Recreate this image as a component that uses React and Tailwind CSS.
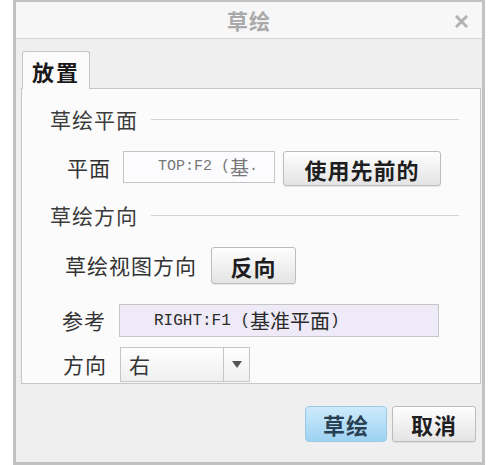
import React from 'react';

const cjk = { fontFamily: '"Noto Sans CJK SC", "Noto Sans", sans-serif' };
const mono = { fontFamily: '"Liberation Mono", "Noto Sans CJK SC", monospace' };

const SectionTitle = ({ children, className = '' }) => (
    <div className={`flex items-center h-[24px] pl-[28px] pr-[21px] ${className}`}>
        <span className="text-[21px] tracking-[1px] text-[#3c3c3c] leading-none">{children}</span>
        <div className="flex-1 h-px bg-[#d4d4d4] ml-[13px]" />
    </div>
);

const Button = ({ children, className = '' }) => (
    <button
        className={`flex items-center justify-center rounded-[3px] border border-[#bcbcbc] bg-gradient-to-b from-[#fefefe] to-[#e4e4e4] text-[22px] font-bold tracking-[1px] text-[#1e1e1e] leading-none shadow-[0_1px_1px_rgba(0,0,0,0.08)] ${className}`}
        style={cjk}
    >
        {children}
    </button>
);

export default function App() {
    return (
        <div className="w-[490px] h-[465px] bg-white pl-[13px] pr-[5px]" style={cjk}>
            <div className="w-[472px] h-[465px] flex flex-col border-x-[3px] border-b-[3px] border-t-2 border-[#c2c2c2] bg-[#efefef]">
                {/* title bar */}
                <div className="relative h-[37px] bg-[#f7f7f7] border-b border-[#d6d6d6] flex items-center justify-center shrink-0">
                    <span className="text-[21px] font-semibold tracking-[1px] text-[#a9a9a9] leading-none">草绘</span>
                    <svg className="absolute right-[14px] top-[13px]" width="13" height="13" viewBox="0 0 13 13">
                        <path d="M2 2 L11 11 M11 2 L2 11" stroke="#b3b3b3" strokeWidth="3" strokeLinecap="square" />
                    </svg>
                </div>

                {/* tabs + panel */}
                <div className="pl-[5px] pr-[1px] pt-[12px] shrink-0">
                    <div className="relative z-10 ml-px w-[68px] h-[38px] -mb-px rounded-t-[3px] border border-b-0 border-[#c6c6c6] bg-[#fbfbfb] flex items-center justify-center">
                        <span className="text-[22px] font-bold tracking-[2px] text-[#1a1a1a] leading-none">放置</span>
                    </div>
                    <div className="h-[296px] border border-[#c6c6c6] bg-[#fbfbfb] flex flex-col">
                        <SectionTitle className="mt-[18px]">草绘平面</SectionTitle>

                        <div className="flex items-start mt-[20px] h-[35px]">
                            <span className="ml-[45px] mt-[4px] text-[21px] tracking-[1px] text-[#333] leading-none h-[24px] flex items-center">平面</span>
                            <div className="ml-[12px] w-[152px] h-[32px] border border-[#c4c4c4] bg-[#fcfcfe] flex items-center pl-[34px] overflow-hidden whitespace-nowrap text-[15px] text-[#777]" style={mono}>
                                TOP:F2 (<span className="text-[19px]" style={cjk}>基</span>.
                            </div>
                            <Button className="ml-[8px] w-[158px] h-[35px]">使用先前的</Button>
                        </div>

                        <SectionTitle className="mt-[17px]">草绘方向</SectionTitle>

                        <div className="flex items-center mt-[20px] h-[37px]">
                            <span className="ml-[43px] text-[21px] tracking-[1px] text-[#333] leading-none">草绘视图方向</span>
                            <Button className="ml-[14px] w-[85px] h-[37px]">反向</Button>
                        </div>

                        <div className="flex items-center mt-[20px] h-[33px]">
                            <span className="ml-[40px] text-[21px] tracking-[1px] text-[#333] leading-none">参考</span>
                            <div className="ml-[13px] w-[320px] h-[33px] border border-[#c6c6c6] bg-[#eeeaf7] flex items-center pl-[34px] whitespace-nowrap text-[16px] text-[#2a2a2a]" style={mono}>
                                RIGHT:F1 (<span className="text-[20px]" style={cjk}>基准平面</span>)
                            </div>
                        </div>

                        <div className="flex items-center mt-[10px] h-[35px]">
                            <span className="ml-[41px] text-[21px] tracking-[1px] text-[#333] leading-none">方向</span>
                            <div className="ml-[13px] w-[130px] h-[35px] border border-[#c6c6c6] bg-gradient-to-b from-[#ffffff] to-[#efefef] flex items-stretch">
                                <div className="flex-1 flex items-center pl-[8px] text-[21px] text-[#333] leading-none">右</div>
                                <div className="w-[26px] border-l border-[#c6c6c6] flex items-center justify-center">
                                    <svg width="10" height="7" viewBox="0 0 10 7">
                                        <path d="M0 0 L10 0 L5 7 Z" fill="#555" />
                                    </svg>
                                </div>
                            </div>
                        </div>
                    </div>
                </div>

                {/* footer */}
                <div className="flex justify-end gap-[5px] pr-[6px] mt-[22px]">
                    <button
                        className="w-[82px] h-[36px] rounded-[4px] border border-[#9ccae6] bg-gradient-to-b from-[#cdeafb] to-[#9dd2f2] flex items-center justify-center text-[22px] font-bold tracking-[1px] text-[#2a3f52] leading-none"
                        style={cjk}
                    >
                        草绘
                    </button>
                    <Button className="w-[84px] h-[36px]">取消</Button>
                </div>
                <div className="flex-1" />
            </div>
        </div>
    );
}
